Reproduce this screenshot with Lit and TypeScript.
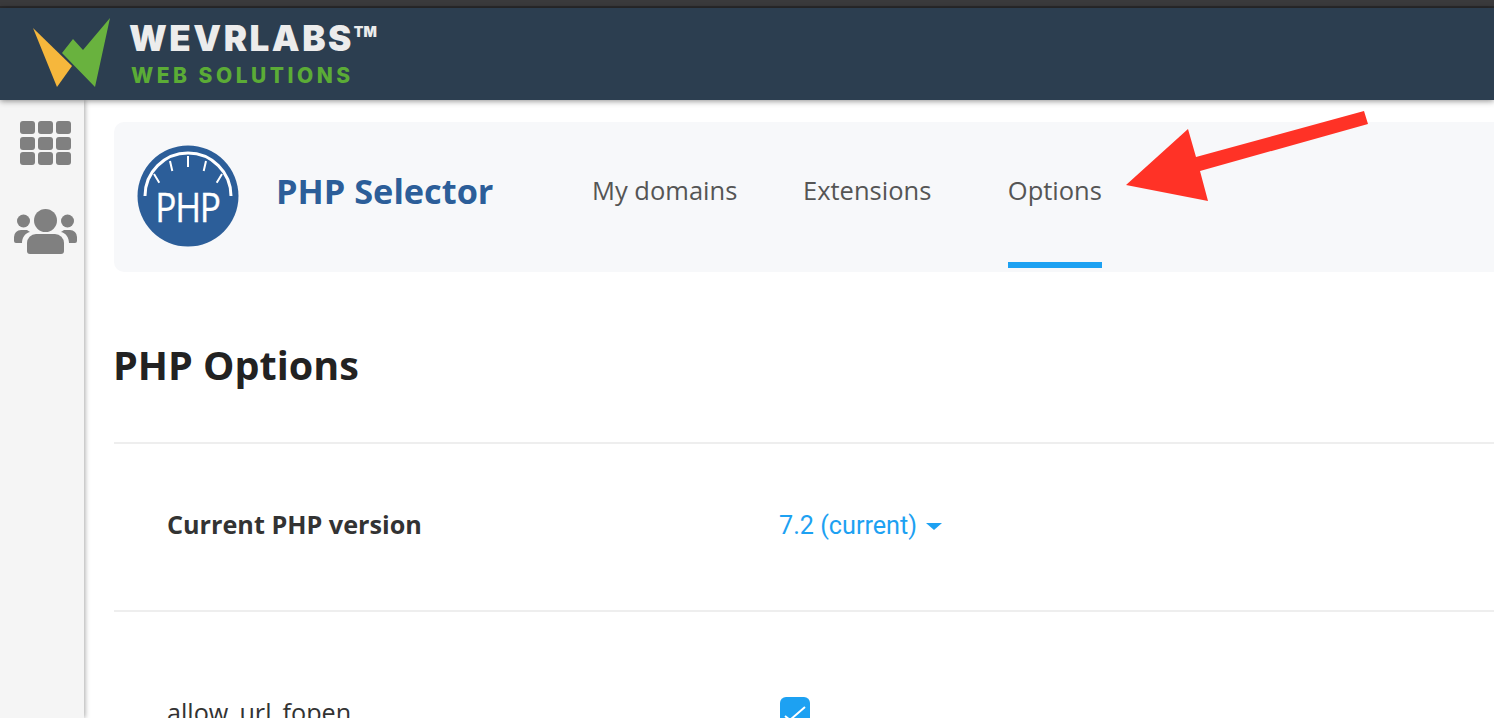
import { LitElement, html, css, svg } from "lit";
import { customElement } from "lit/decorators.js";

@customElement("app-root")
export class AppRoot extends LitElement {
  static styles = css`
    :host { display: block; position: relative; width: 1494px; height: 718px; overflow: hidden; background: #fff; font-family: "Open Sans", "Liberation Sans", sans-serif; }
    .chrome { height: 6px; background: #3a3a3c; border-bottom: 2px solid #2b2b2d; }
    .top { height: 92px; background: #2c3e50; display: flex; align-items: flex-start; position: relative; z-index: 2; box-shadow: 0 1px 6px rgba(0,0,0,.45); }
    .mark { width: 130px; height: 92px; flex: none; display: block; }
    .brand { display: flex; flex-direction: column; font-family: Inter, sans-serif; font-weight: 900; line-height: 1; margin-left: -1px; }
    .brand-a { color: #ececec; font-size: 35px; letter-spacing: 2.5px; margin-top: 13px; height: 38px; white-space: nowrap; }
    .brand-a sup { font-size: 14px; letter-spacing: 0; vertical-align: 14px; line-height: 0; font-weight: 900; }
    .brand-b { color: #5bac36; font-size: 21px; font-weight: 800; letter-spacing: 3.5px; margin-left: 2px; margin-top: 6px; white-space: nowrap; }
    .body { display: flex; height: 618px; }
    .side { width: 84px; flex: none; background: #f5f5f5; box-shadow: 1px 0 5px rgba(0,0,0,.35); display: flex; flex-direction: column; align-items: center; padding-top: 21px; gap: 44px; box-sizing: border-box; position: relative; z-index: 1; }
    .side svg { display: block; margin-left: 8px; }
    .main { flex: 1; min-width: 0; padding: 22px 0 0 30px; }
    .bar { height: 150px; background: #f7f8fa; border-radius: 10px 0 0 10px; display: flex; align-items: stretch; }
    .php { width: 102px; height: 102px; flex: none; margin: 23px 0 0 23px; display: block; }
    .title { font-size: 34.3px; font-weight: 700; color: #2c5e99; margin: 0 0 0 37px; width: 316px; flex: none; line-height: 137px; white-space: nowrap; }
    .tab { font-size: 25.5px; color: #555; height: 144px; line-height: 137px; white-space: nowrap; }
    .tab.t1 { width: 144px; }
    .tab.t2 { margin-left: 67px; }
    .tab.t3 { margin-left: 76.5px; position: relative; }
    .tab.t3::after { content: ""; position: absolute; left: 0; right: 0; top: 140px; height: 6px; background: #1da1f2; }
    h1 { font-size: 39.5px; font-weight: 700; color: #222; margin: 0; padding: 70px 0 0; text-indent: -1px; line-height: 46px; height: 100px; border-bottom: 2px solid #eee; }
    .row { display: flex; padding: 0 0 6px 53px; border-bottom: 2px solid #eee; height: 160px; align-items: center; }
    .label { width: 612px; flex: none; font-size: 25.2px; color: #333; white-space: nowrap; }
    .label.b { font-weight: 700; }
    .val { font-family: Roboto, sans-serif; font-size: 25.2px; color: #1da1f2; display: flex; align-items: center; gap: 9px; margin-top: 2px; }
    .caret { width: 0; height: 0; border: 8px solid transparent; border-top: 7px solid #1da1f2; border-bottom: 0; margin-top: 2px; }
    .row2 { display: flex; padding: 85px 0 0 53px; align-items: flex-start; }
    .row2 .label { line-height: 30px; width: 613px; }
    .check { width: 30px; height: 30px; border-radius: 6px; background: #1da1f2; display: block; }
    .arrow { position: absolute; left: 1120px; top: 105px; width: 256px; height: 102px; z-index: 3; }
  `;

  render() {
    return html`
      <div class="chrome"></div>
      <header class="top">
        <svg class="mark" viewBox="0 0 130 92">
          <polygon points="33,20 72,58 57,79" fill="#f6b73c"/>
          <polygon points="110,10 95,79 62,45 73,31 83,42" fill="#69b23e"/>
        </svg>
        <div class="brand">
          <div class="brand-a">WEVRLABS<sup>TM</sup></div>
          <div class="brand-b">WEB SOLUTIONS</div>
        </div>
      </header>
      <div class="body">
        <nav class="side">
          <svg width="52" height="44" viewBox="0 0 52 44" fill="#808080">
            ${[0, 18, 36].map((x) => [0, 16, 31].map((y) => svg`<rect x=${x} y=${y} width="15" height="13" rx="3"/>`))}
          </svg>
          <svg width="64" height="46" viewBox="0 0 64 46" fill="#808080">
            <circle cx="31.5" cy="11.5" r="11.5"/>
            <circle cx="9.5" cy="12" r="6.5"/><circle cx="53.5" cy="12" r="6.5"/>
            <path d="M13 21H7a7 7 0 0 0-7 7v4a2 2 0 0 0 2 2h6c0-5 3-10 8-11z"/>
            <path d="M50 21h6a7 7 0 0 1 7 7v4a2 2 0 0 1-2 2h-6c0-5-3-10-8-11z"/>
            <path d="M22 25h19a9 9 0 0 1 9 9v8a3 3 0 0 1-3 3H16a3 3 0 0 1-3-3v-8a9 9 0 0 1 9-9z"/>
          </svg>
        </nav>
        <main class="main">
          <div class="bar">
            <svg class="php" viewBox="0 0 102 102">
              <circle cx="51" cy="51" r="50.5" fill="#2c5e99"/>
              <path d="M8 51A43 43 0 0 1 94 51" fill="none" stroke="#fff" stroke-width="3"/>
              <path d="M51 11v11M33 16l2.300 10M69 16l-2.300 10M17 29l5.300 8.700M85 29l-5.300 8.700" stroke="#fff" stroke-width="2"/>
              <text transform="translate(50.500 77) scale(.88 1)" text-anchor="middle" font-family="Open Sans, sans-serif" font-size="40" letter-spacing="-1.500" fill="#fff" stroke="#fff" stroke-width=".3">PHP</text>
            </svg>
            <div class="title">PHP Selector</div>
            <div class="tab t1">My domains</div>
            <div class="tab t2">Extensions</div>
            <div class="tab t3">Options</div>
          </div>
          <h1>PHP Options</h1>
          <div class="row">
            <div class="label b">Current PHP version</div>
            <div class="val">7.2 (current) <span class="caret"></span></div>
          </div>
          <div class="row2">
            <div class="label">allow_url_fopen</div>
            <svg class="check" viewBox="0 0 30 30"><path d="M5 19l5 4 15-13" fill="none" stroke="#fff" stroke-width="2"/></svg>
          </div>
        </main>
      </div>
      <svg class="arrow" viewBox="1120 105 256 102">
        <polygon points="1364,111 1368,124 1200,171 1208,201 1126,185 1188,129 1196,157" fill="#ff3226"/>
      </svg>
    `;
  }
}
